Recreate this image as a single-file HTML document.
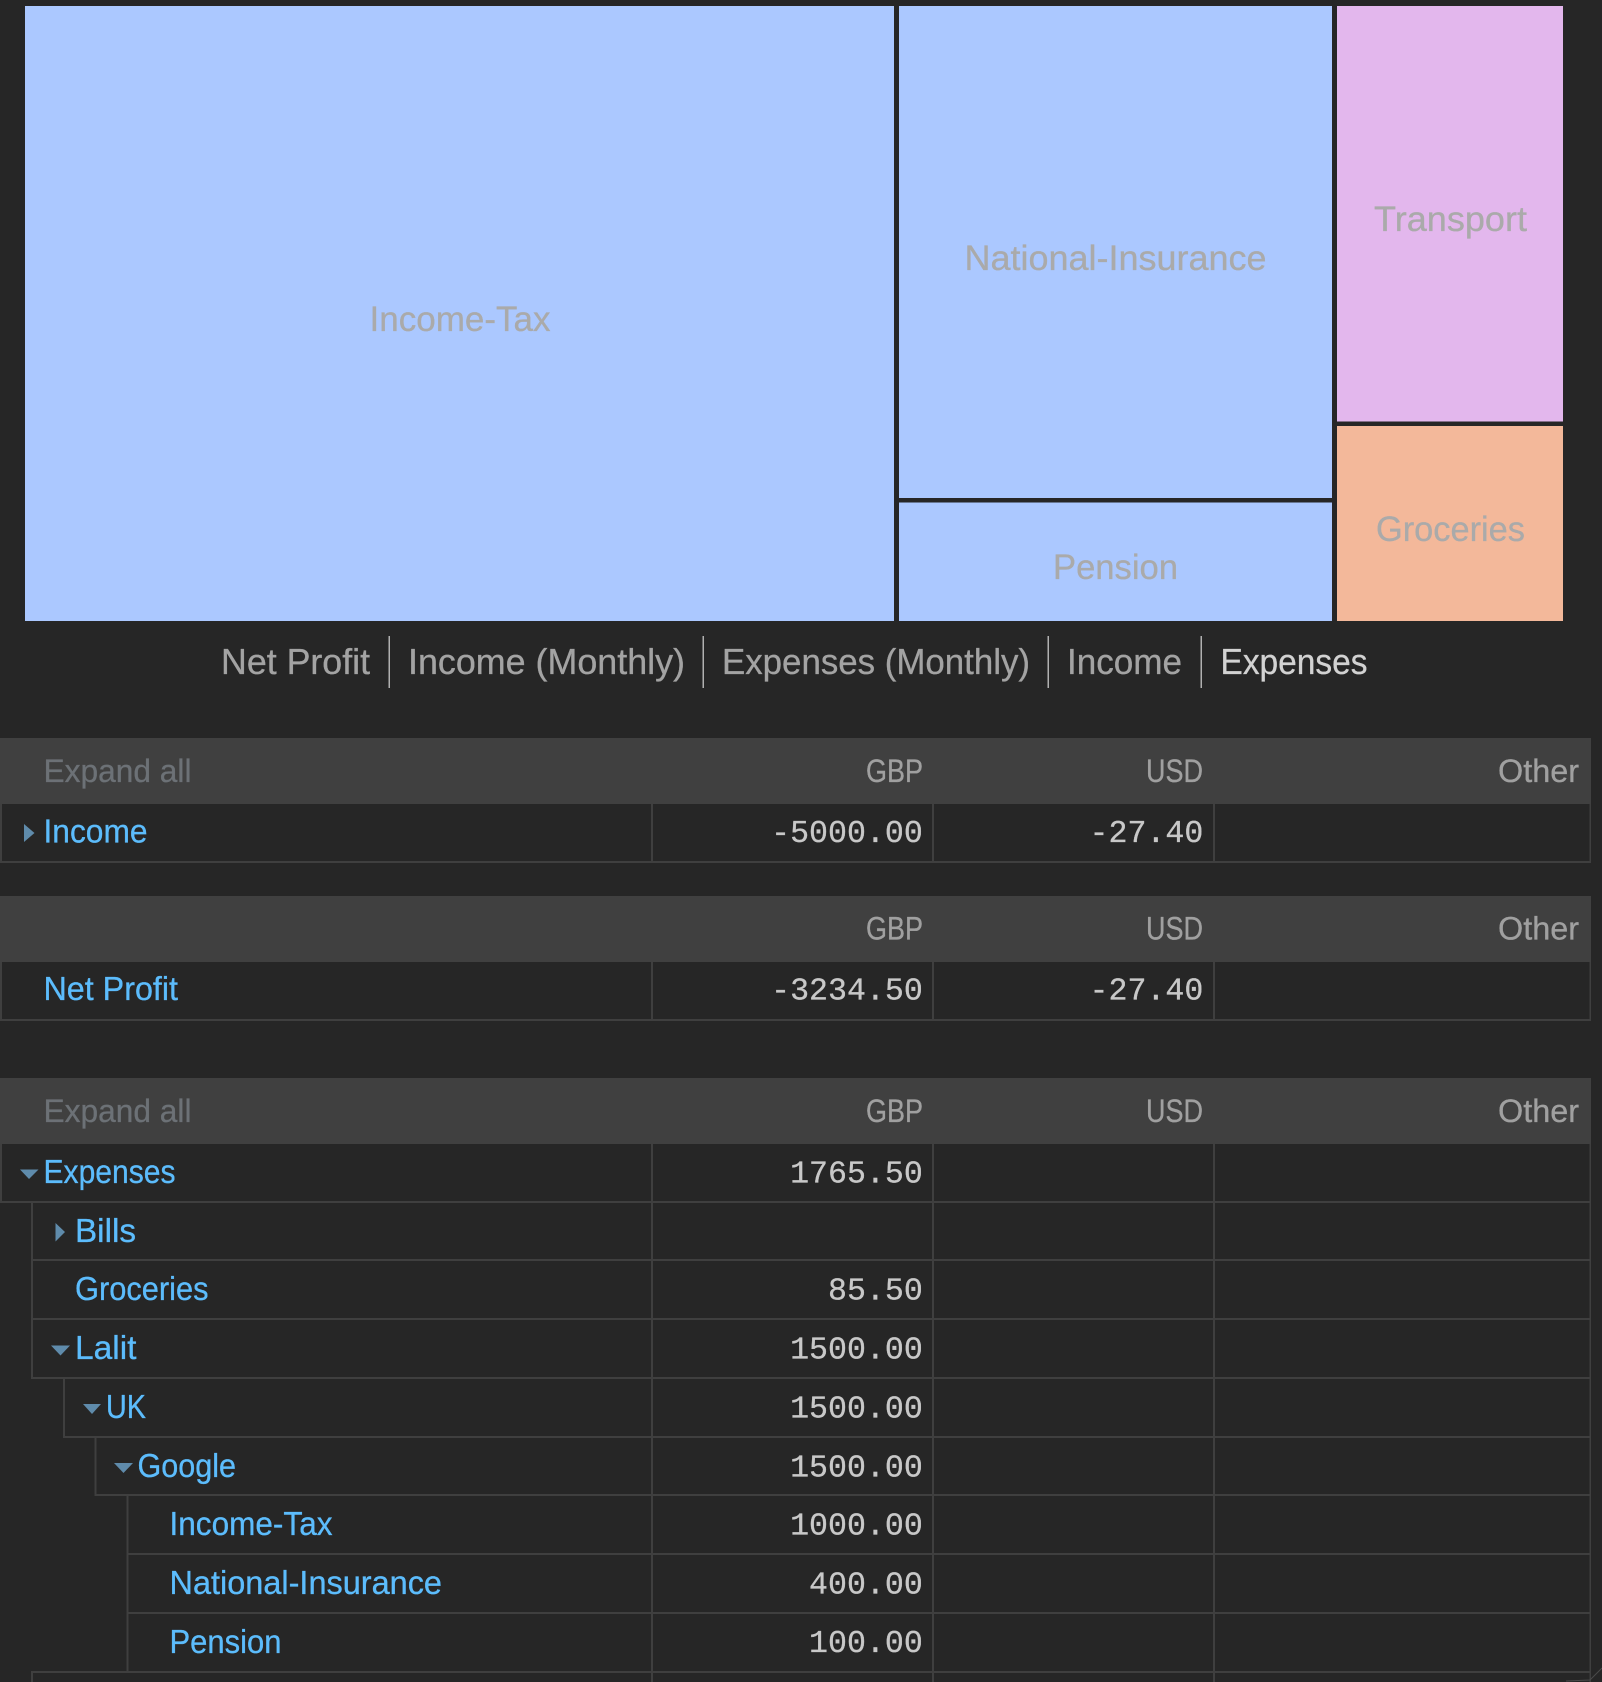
<!DOCTYPE html>
<html><head><meta charset="utf-8"><title>Statistics</title>
<style>
html,body{margin:0;padding:0;background:#262626;width:1602px;height:1682px;overflow:hidden}
svg{display:block}
text{font-family:"Liberation Sans",sans-serif;stroke-width:.3px}
.tm{font-size:35px;fill:#aaaaaa;stroke:#aaaaaa}
.tab{font-size:36px;fill:#a3a3a3;stroke:#a3a3a3}
.h{font-size:32px;fill:#a0a0a0;stroke:#a0a0a0}
.e{font-size:32px;fill:#6c7176;stroke:#6c7176}
.l{font-size:33px;fill:#5cbcfc;stroke:#5cbcfc}
.n{font-family:"Liberation Mono",monospace;font-size:31.6px;fill:#c8c8c8;stroke:#c8c8c8;text-anchor:end}
.b{fill:#3f3f3f}
.a{fill:#5f8bab}
</style></head><body>
<svg xmlns="http://www.w3.org/2000/svg" width="1602" height="1682" viewBox="0 0 1602 1682">
<rect width="1602" height="1682" fill="#262626"/>
<!-- treemap -->
<rect x="25" y="6" width="869" height="615" fill="#abc8ff"/>
<rect x="899" y="6" width="433" height="492" fill="#abc8ff"/>
<rect x="899" y="502.500" width="433" height="118.500" fill="#abc8ff"/>
<rect x="1337" y="6" width="226" height="415.500" fill="#e3b7ed"/>
<rect x="1337" y="426" width="226" height="195" fill="#f3b89a"/>
<text class="tm" x="369.500" y="331" textLength="181" lengthAdjust="spacingAndGlyphs">Income-Tax</text>
<text class="tm" x="964.500" y="270" textLength="302" lengthAdjust="spacingAndGlyphs">National-Insurance</text>
<text class="tm" x="1053" y="579" textLength="125" lengthAdjust="spacingAndGlyphs">Pension</text>
<text class="tm" x="1374" y="231" textLength="153" lengthAdjust="spacingAndGlyphs">Transport</text>
<text class="tm" x="1376" y="541" textLength="149" lengthAdjust="spacingAndGlyphs">Groceries</text>
<!-- tabs -->
<text class="tab" x="221" y="674" textLength="149" lengthAdjust="spacingAndGlyphs">Net Profit</text>
<rect x="388.500" y="636" width="1.500" height="52" fill="#b0b0b0"/>
<text class="tab" x="408" y="674" textLength="277" lengthAdjust="spacingAndGlyphs">Income (Monthly)</text>
<rect x="702.500" y="636" width="1.500" height="52" fill="#b0b0b0"/>
<text class="tab" x="722" y="674" textLength="308" lengthAdjust="spacingAndGlyphs">Expenses (Monthly)</text>
<rect x="1047.500" y="636" width="1.500" height="52" fill="#b0b0b0"/>
<text class="tab" x="1067" y="674" textLength="115" lengthAdjust="spacingAndGlyphs">Income</text>
<rect x="1200.500" y="636" width="1.500" height="52" fill="#b0b0b0"/>
<text class="tab" x="1220.500" y="674" textLength="147" lengthAdjust="spacingAndGlyphs" style="fill:#d2d2d2;stroke:#d2d2d2">Expenses</text>

<!-- table 1 -->
<rect x="0" y="738" width="1591" height="66" fill="#404040"/>
<text class="e" x="43.500" y="782" textLength="148" lengthAdjust="spacingAndGlyphs">Expand all</text>
<text class="h" x="866" y="782" textLength="57" lengthAdjust="spacingAndGlyphs">GBP</text>
<text class="h" x="1146" y="782" textLength="57" lengthAdjust="spacingAndGlyphs">USD</text>
<text class="h" x="1498" y="782" textLength="81" lengthAdjust="spacingAndGlyphs">Other</text>
<rect class="b" x="0" y="804" width="2" height="59"/>
<rect class="b" x="651" y="804" width="2" height="59"/>
<rect class="b" x="932" y="804" width="2" height="59"/>
<rect class="b" x="1213" y="804" width="2" height="59"/>
<rect class="b" x="1589.500" y="804" width="1.500" height="59"/>
<rect class="b" x="0" y="861" width="1591" height="2"/>
<polygon class="a" points="24,824 34.500,833 24,842"/>
<text class="l" x="43.500" y="842.500" textLength="104" lengthAdjust="spacingAndGlyphs">Income</text>
<text class="n" x="922.800" y="842">-5000.00</text>
<text class="n" x="1203.300" y="842">-27.40</text>

<!-- table 2 -->
<rect x="0" y="896" width="1591" height="66" fill="#404040"/>
<text class="h" x="866" y="939.500" textLength="57" lengthAdjust="spacingAndGlyphs">GBP</text>
<text class="h" x="1146" y="939.500" textLength="57" lengthAdjust="spacingAndGlyphs">USD</text>
<text class="h" x="1498" y="939.500" textLength="81" lengthAdjust="spacingAndGlyphs">Other</text>
<rect class="b" x="0" y="962" width="2" height="59"/>
<rect class="b" x="651" y="962" width="2" height="59"/>
<rect class="b" x="932" y="962" width="2" height="59"/>
<rect class="b" x="1213" y="962" width="2" height="59"/>
<rect class="b" x="1589.500" y="962" width="1.500" height="59"/>
<rect class="b" x="0" y="1019" width="1591" height="2"/>
<text class="l" x="43.500" y="1000" textLength="134.500" lengthAdjust="spacingAndGlyphs">Net Profit</text>
<text class="n" x="922.800" y="999.500">-3234.50</text>
<text class="n" x="1203.300" y="999.500">-27.40</text>

<!-- table 3 -->
<rect x="0" y="1078" width="1591" height="66" fill="#404040"/>
<text class="e" x="43.500" y="1122" textLength="148" lengthAdjust="spacingAndGlyphs">Expand all</text>
<text class="h" x="866" y="1122" textLength="57" lengthAdjust="spacingAndGlyphs">GBP</text>
<text class="h" x="1146" y="1122" textLength="57" lengthAdjust="spacingAndGlyphs">USD</text>
<text class="h" x="1498" y="1122" textLength="81" lengthAdjust="spacingAndGlyphs">Other</text>
<rect class="b" x="651" y="1144" width="2" height="538"/>
<rect class="b" x="932" y="1144" width="2" height="538"/>
<rect class="b" x="1213" y="1144" width="2" height="538"/>
<rect class="b" x="1589.500" y="1144" width="1.500" height="538"/>
<rect class="b" x="0" y="1144" width="2" height="59"/>
<rect class="b" x="31" y="1203" width="2" height="175"/>
<rect class="b" x="63" y="1378" width="2" height="60"/>
<rect class="b" x="94.500" y="1438" width="2" height="58"/>
<rect class="b" x="126.500" y="1496" width="2" height="176"/>
<rect class="b" x="31" y="1671" width="2" height="11"/>
<rect class="b" x="0" y="1201" width="1591" height="2"/>
<rect class="b" x="31" y="1259" width="1560" height="2"/>
<rect class="b" x="31" y="1318" width="1560" height="2"/>
<rect class="b" x="31" y="1377" width="1560" height="2"/>
<rect class="b" x="63" y="1436" width="1528" height="2"/>
<rect class="b" x="94.500" y="1494" width="1496.500" height="2"/>
<rect class="b" x="126.500" y="1553" width="1464.500" height="2"/>
<rect class="b" x="126.500" y="1612" width="1464.500" height="2"/>
<rect class="b" x="31" y="1671" width="1560" height="2"/>
<path d="M1566 1681 L1590 1680 L1602 1668" fill="none" stroke="#4a4a4a" stroke-width="1"/>

<polygon class="a" points="20,1169.500 38.500,1169.500 29,1179"/>
<text class="l" x="43.500" y="1183" textLength="132" lengthAdjust="spacingAndGlyphs">Expenses</text>
<text class="n" x="922.800" y="1182.500">1765.50</text>

<polygon class="a" points="55.500,1223 65,1232 55.500,1241.500"/>
<text class="l" x="75" y="1242" textLength="61" lengthAdjust="spacingAndGlyphs">Bills</text>

<text class="l" x="75" y="1300" textLength="133.500" lengthAdjust="spacingAndGlyphs">Groceries</text>
<text class="n" x="922.800" y="1299.500">85.50</text>

<polygon class="a" points="51,1345.500 70,1345.500 60.500,1355.500"/>
<text class="l" x="75" y="1359" textLength="61.500" lengthAdjust="spacingAndGlyphs">Lalit</text>
<text class="n" x="922.800" y="1358.500">1500.00</text>

<polygon class="a" points="83,1404 101,1404 92,1414"/>
<text class="l" x="106" y="1418" textLength="40" lengthAdjust="spacingAndGlyphs">UK</text>
<text class="n" x="922.800" y="1417.500">1500.00</text>

<polygon class="a" points="114,1463 133,1463 123.500,1473"/>
<text class="l" x="137.500" y="1477" textLength="98.500" lengthAdjust="spacingAndGlyphs">Google</text>
<text class="n" x="922.800" y="1476.500">1500.00</text>

<text class="l" x="169.500" y="1535" textLength="163" lengthAdjust="spacingAndGlyphs">Income-Tax</text>
<text class="n" x="922.800" y="1534.500">1000.00</text>

<text class="l" x="169.500" y="1594" textLength="272.500" lengthAdjust="spacingAndGlyphs">National-Insurance</text>
<text class="n" x="922.800" y="1593.500">400.00</text>

<text class="l" x="169.500" y="1653" textLength="112" lengthAdjust="spacingAndGlyphs">Pension</text>
<text class="n" x="922.800" y="1652">100.00</text>
</svg>
</body></html>
